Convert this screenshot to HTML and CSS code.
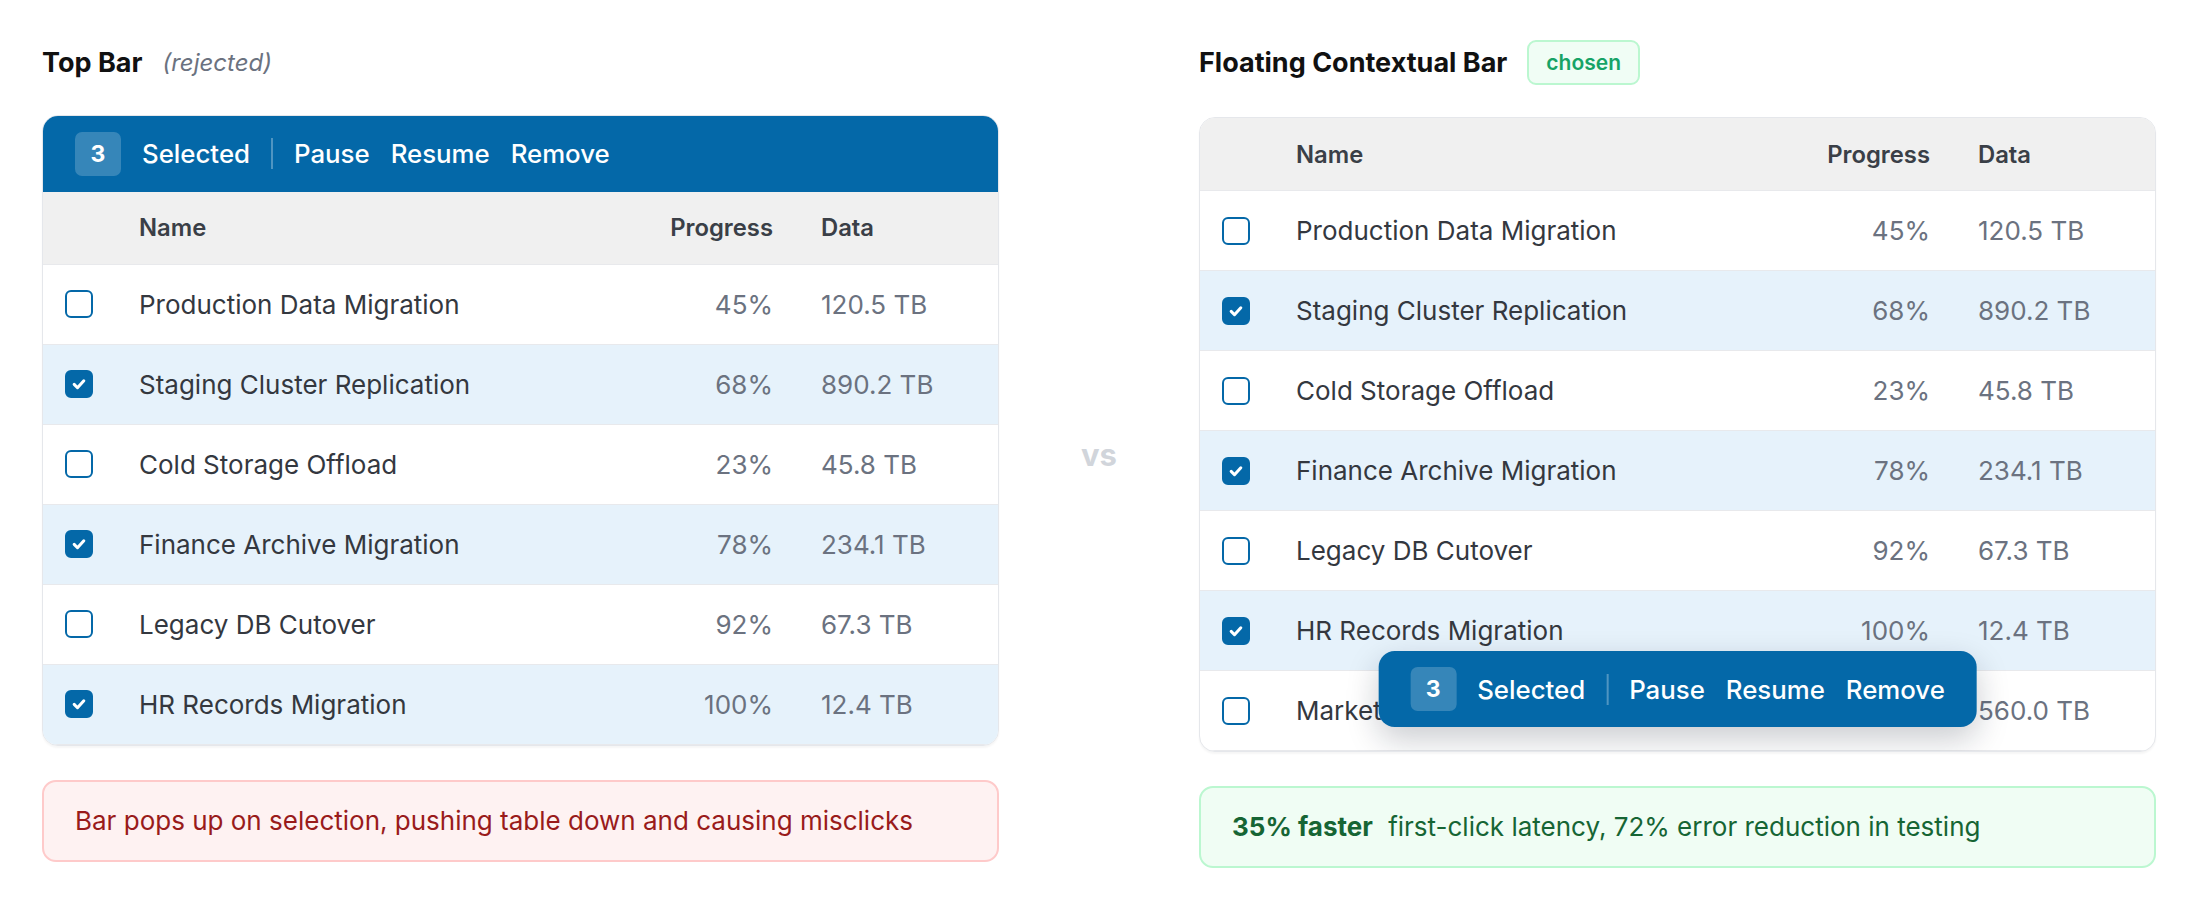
FILE: index.html
```html
<!DOCTYPE html>
<html lang="en">
<head>
    <meta charset="UTF-8">
    <meta name="viewport" content="width=device-width, initial-scale=1.0">
    <title>Bulk Action Bar Comparison</title>
    <link rel="stylesheet" href="styles.css">
</head>
<body>
    <main class="compare">
        <!-- Rejected: bar pushes the table down -->
        <section class="variant variant-rejected">
            <div class="variant-head">
                <h2 class="variant-title">Top Bar</h2>
                <span class="variant-tag">(rejected)</span>
            </div>

            <div class="table-card">
                <div class="action-bar">
                    <span class="count">3</span>
                    <span class="action-label">Selected</span>
                    <span class="action-divider"></span>
                    <button class="action-btn">Pause</button>
                    <button class="action-btn">Resume</button>
                    <button class="action-btn">Remove</button>
                </div>

                <div class="row row-head">
                    <span class="cell"></span>
                    <span class="cell">Name</span>
                    <span class="cell num">Progress</span>
                    <span class="cell data">Data</span>
                </div>
                <div class="row">
                    <span class="cell"><span class="check"></span></span>
                    <span class="cell name">Production Data Migration</span>
                    <span class="cell num">45%</span>
                    <span class="cell data">120.5 TB</span>
                </div>
                <div class="row is-selected">
                    <span class="cell"><span class="check is-on"><svg viewBox="0 0 16 16"><path d="M4.5 8.3l2.4 2.4 4.6-5"/></svg></span></span>
                    <span class="cell name">Staging Cluster Replication</span>
                    <span class="cell num">68%</span>
                    <span class="cell data">890.2 TB</span>
                </div>
                <div class="row">
                    <span class="cell"><span class="check"></span></span>
                    <span class="cell name">Cold Storage Offload</span>
                    <span class="cell num">23%</span>
                    <span class="cell data">45.8 TB</span>
                </div>
                <div class="row is-selected">
                    <span class="cell"><span class="check is-on"><svg viewBox="0 0 16 16"><path d="M4.5 8.3l2.4 2.4 4.6-5"/></svg></span></span>
                    <span class="cell name">Finance Archive Migration</span>
                    <span class="cell num">78%</span>
                    <span class="cell data">234.1 TB</span>
                </div>
                <div class="row">
                    <span class="cell"><span class="check"></span></span>
                    <span class="cell name">Legacy DB Cutover</span>
                    <span class="cell num">92%</span>
                    <span class="cell data">67.3 TB</span>
                </div>
                <div class="row is-selected">
                    <span class="cell"><span class="check is-on"><svg viewBox="0 0 16 16"><path d="M4.5 8.3l2.4 2.4 4.6-5"/></svg></span></span>
                    <span class="cell name">HR Records Migration</span>
                    <span class="cell num">100%</span>
                    <span class="cell data">12.4 TB</span>
                </div>
            </div>

            <div class="verdict verdict-bad">Bar pops up on selection, pushing table down and causing misclicks</div>
        </section>

        <div class="versus">vs</div>

        <!-- Chosen: bar floats over the table -->
        <section class="variant">
            <div class="variant-head">
                <h2 class="variant-title">Floating Contextual Bar</h2>
                <span class="chip">chosen</span>
            </div>

            <div class="table-card">
                <div class="row row-head">
                    <span class="cell"></span>
                    <span class="cell">Name</span>
                    <span class="cell num">Progress</span>
                    <span class="cell data">Data</span>
                </div>
                <div class="row">
                    <span class="cell"><span class="check"></span></span>
                    <span class="cell name">Production Data Migration</span>
                    <span class="cell num">45%</span>
                    <span class="cell data">120.5 TB</span>
                </div>
                <div class="row is-selected">
                    <span class="cell"><span class="check is-on"><svg viewBox="0 0 16 16"><path d="M4.5 8.3l2.4 2.4 4.6-5"/></svg></span></span>
                    <span class="cell name">Staging Cluster Replication</span>
                    <span class="cell num">68%</span>
                    <span class="cell data">890.2 TB</span>
                </div>
                <div class="row">
                    <span class="cell"><span class="check"></span></span>
                    <span class="cell name">Cold Storage Offload</span>
                    <span class="cell num">23%</span>
                    <span class="cell data">45.8 TB</span>
                </div>
                <div class="row is-selected">
                    <span class="cell"><span class="check is-on"><svg viewBox="0 0 16 16"><path d="M4.5 8.3l2.4 2.4 4.6-5"/></svg></span></span>
                    <span class="cell name">Finance Archive Migration</span>
                    <span class="cell num">78%</span>
                    <span class="cell data">234.1 TB</span>
                </div>
                <div class="row">
                    <span class="cell"><span class="check"></span></span>
                    <span class="cell name">Legacy DB Cutover</span>
                    <span class="cell num">92%</span>
                    <span class="cell data">67.3 TB</span>
                </div>
                <div class="row is-selected">
                    <span class="cell"><span class="check is-on"><svg viewBox="0 0 16 16"><path d="M4.5 8.3l2.4 2.4 4.6-5"/></svg></span></span>
                    <span class="cell name">HR Records Migration</span>
                    <span class="cell num">100%</span>
                    <span class="cell data">12.4 TB</span>
                </div>
                <div class="row">
                    <span class="cell"><span class="check"></span></span>
                    <span class="cell name">Marketing Analytics Sync</span>
                    <span class="cell num">37%</span>
                    <span class="cell data">560.0 TB</span>
                </div>

                <div class="action-bar floating">
                    <span class="count">3</span>
                    <span class="action-label">Selected</span>
                    <span class="action-divider"></span>
                    <button class="action-btn">Pause</button>
                    <button class="action-btn">Resume</button>
                    <button class="action-btn">Remove</button>
                </div>
            </div>

            <div class="verdict verdict-good"><strong>35% faster</strong> first-click latency, 72% error reduction in testing</div>
        </section>
    </main>
</body>
</html>
```

FILE: styles.css
```css
body {
    margin: 0;
    background: #ffffff;
    font-family: Inter, "Noto Sans", sans-serif;
    color: #111827;
}

.compare {
    display: grid;
    grid-template-columns: 1fr 200px 1fr;
    align-items: center;
    height: 100vh;
    padding: 0 42px;
    box-sizing: border-box;
}

.variant-rejected {
    margin-bottom: 4px;
}

/* heading above each table */
.variant-head {
    display: flex;
    align-items: center;
    gap: 20px;
    min-height: 40px;
    margin-bottom: 32px;
}

.variant-title {
    margin: 0;
    font-size: 27px;
    font-weight: 650;
    line-height: 40px;
    color: #111111;
}

.variant-tag {
    font-size: 24px;
    font-style: italic;
    color: #6b7280;
}

.chip {
    display: inline-flex;
    align-items: center;
    height: 41px;
    padding: 0 17px;
    border: 2px solid #bbf7d0;
    border-radius: 9px;
    background-color: #f0fdf5;
    color: #16a366;
    font-size: 21px;
    font-weight: 600;
}

.versus {
    text-align: center;
    font-size: 31px;
    font-weight: 700;
    color: #d1d5db;
}

/* table */
.table-card {
    position: relative;
    border: 1px solid #e5e7eb;
    border-radius: 16px;
    overflow: hidden;
    background-color: #ffffff;
    box-shadow: 0 2px 2px rgba(0, 0, 0, 0.04);
}

.row {
    display: grid;
    grid-template-columns: 74px 1fr 170px 201px;
    align-items: center;
    height: 80px;
    box-sizing: border-box;
    border-bottom: 1px solid #e8e9ec;
    font-size: 26px;
}

.row-head {
    height: 73px;
    background-color: #f0f0f0;
    font-size: 23.8px;
    font-weight: 600;
    color: #3a3f47;
}

.row.is-selected {
    background-color: #e6f2fb;
}

.cell {
    padding: 0 22px;
    white-space: nowrap;
}

.name {
    color: #34383f;
}

.num {
    padding-right: 24px;
    text-align: right;
}

.data {
    padding-left: 24px;
}

.row:not(.row-head) .num,
.row:not(.row-head) .data {
    color: #6b7280;
}

.check {
    display: flex;
    align-items: center;
    justify-content: center;
    width: 28px;
    height: 28px;
    box-sizing: border-box;
    border: 2px solid #0468a8;
    border-radius: 6px;
    background-color: #ffffff;
}

.check.is-on {
    background-color: #0468a8;
}

.check svg {
    width: 22px;
    height: 22px;
}

.check path {
    fill: none;
    stroke: #ffffff;
    stroke-width: 2.2;
    stroke-linecap: round;
    stroke-linejoin: round;
}

/* selection action bar */
.action-bar {
    display: flex;
    align-items: center;
    gap: 21px;
    height: 76px;
    padding: 0 32px;
    background-color: #0468a8;
    color: #ffffff;
    font-size: 25.8px;
    font-weight: 500;
}

.action-bar.floating {
    position: absolute;
    left: 50%;
    bottom: 24px;
    transform: translateX(-50%);
    border-radius: 16px;
    box-shadow: 0 12px 32px rgba(15, 23, 42, 0.22);
}

.count {
    display: flex;
    align-items: center;
    justify-content: center;
    width: 46px;
    height: 44px;
    border-radius: 7px;
    background-color: rgba(255, 255, 255, 0.2);
    font-size: 23px;
    font-weight: 700;
}

.action-divider {
    width: 2px;
    height: 31px;
    background-color: rgba(255, 255, 255, 0.3);
}

.action-btn {
    padding: 0;
    border: 0;
    background: none;
    color: inherit;
    font: inherit;
    cursor: pointer;
}

/* outcome notes */
.verdict {
    margin-top: 34px;
    padding: 22px 31px;
    border: 2px solid;
    border-radius: 14px;
    font-size: 26px;
    line-height: 34px;
}

.verdict-bad {
    border-color: #fecaca;
    background-color: #fef2f2;
    color: #991b1b;
}

.verdict-good {
    border-color: #bbf7d0;
    background-color: #f0fdf4;
    color: #166534;
}

.verdict-good strong {
    margin-right: 8px;
    font-weight: 700;
}
```
